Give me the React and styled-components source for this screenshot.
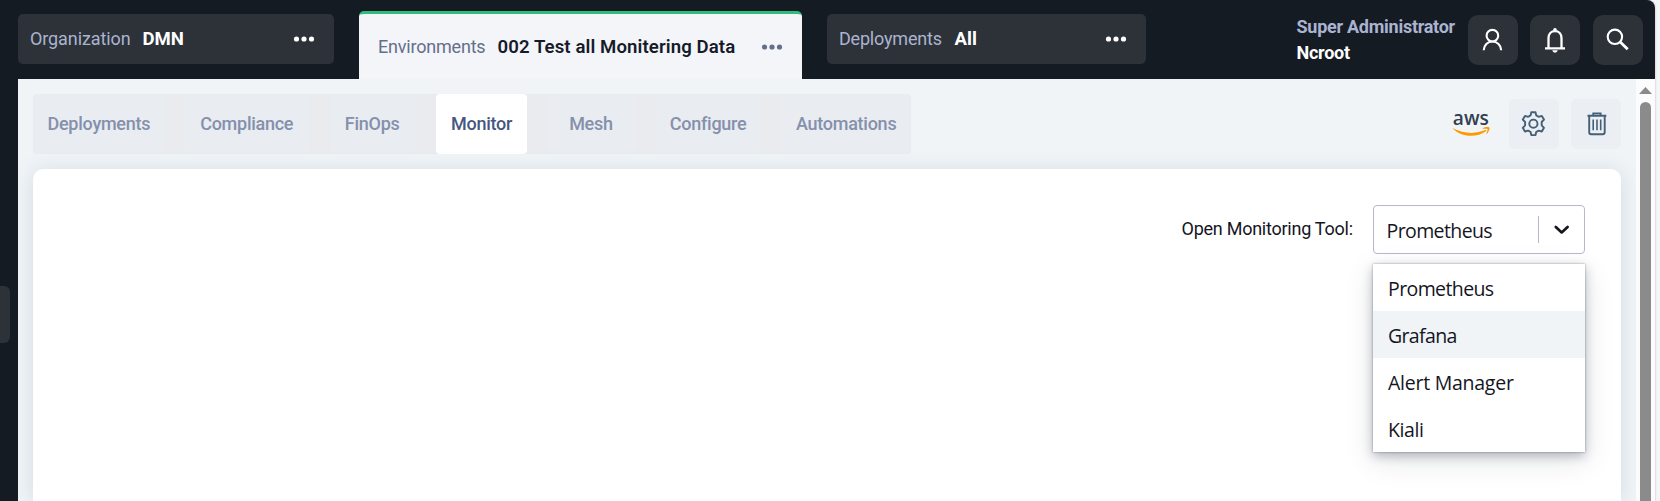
import React from "react";
import styled, { createGlobalStyle } from "styled-components";

const GlobalStyle = createGlobalStyle`
  *, *::before, *::after { box-sizing: border-box; }
  body {
    margin: 0;
    background: #f6f5f7;
    font-family: Roboto, "Liberation Sans", sans-serif;
    overflow: hidden;
  }
  svg { display: block; flex: none; }
`;

const Window = styled.div`
  width: 1655px;
  height: 501px;
  display: flex;
  flex-direction: column;
  background: #151b22;
  border-top-right-radius: 8px;
  overflow: hidden;
  box-shadow: 0 0 2px rgba(0, 0, 0, 0.3);
`;

const Header = styled.header`
  height: 79px;
  flex: none;
  display: flex;
  align-items: flex-start;
  padding-left: 18px;
`;

const Crumb = styled.div`
  display: flex;
  align-items: center;
  width: ${(p) => p.$width}px;
  height: 50px;
  margin: 14px 25px 0 0;
  padding: 0 19px 0 12px;
  border-radius: 5px;
  background: #2d3138;
  color: #fff;
`;

const ActiveCrumb = styled(Crumb)`
  height: 68px;
  margin-top: 11px;
  padding: 1px 19px 0 19px;
  border-top: 3px solid #31bb7f;
  border-radius: 5px 5px 0 0;
  background: #f4f5f9;
  color: #151b2b;
`;

const CrumbLabel = styled.span`
  width: ${(p) => p.$width}px;
  color: ${(p) => (p.$active ? "#646f8b" : "#aab4d0")};
  font-size: 18px;
  line-height: 22px;
  white-space: nowrap;
  letter-spacing: ${(p) => p.$spacing || 0}px;
`;

const CrumbValue = styled.span`
  flex: 1;
  font-size: 18.6px;
  font-weight: ${(p) => p.$weight || 700};
  line-height: 22px;
  white-space: nowrap;
  letter-spacing: ${(p) => p.$spacing || 0}px;
`;

const Account = styled.div`
  margin: 14px 0 0 auto;
  width: 171.5px;
  display: flex;
  flex-direction: column;
  font-size: 18px;
  font-weight: 700;
  line-height: 26px;
  white-space: nowrap;
`;

const Role = styled.span`
  color: #aab4d0;
  letter-spacing: -0.26px;
`;

const UserName = styled.span`
  color: #fff;
  letter-spacing: -0.25px;
`;

const HeaderActions = styled.div`
  display: flex;
  gap: 12px;
  margin: 15px 12px 0 0;
`;

const HeaderButton = styled.button`
  width: 50px;
  height: 50px;
  padding: 0;
  border: 0;
  border-radius: 10px;
  background: #2d3138;
  color: #fff;

  &:last-child { margin-left: 1px; }
`;

const Body = styled.div`
  flex: 1;
  min-height: 0;
  display: flex;
`;

const Rail = styled.div`
  width: 18px;
  flex: none;
  padding-top: 207px;
`;

const RailHandle = styled.div`
  width: 10px;
  height: 57px;
  border-radius: 0 6px 6px 0;
  background: #2d3138;
`;

const Content = styled.main`
  flex: 1;
  min-width: 0;
  padding: 15px 15px 0;
  display: flex;
  flex-direction: column;
  background: #f0f4f7;
  overflow: hidden;
`;

const Toolbar = styled.div`
  height: 60px;
  flex: none;
  display: flex;
  justify-content: space-between;
`;

const Tabs = styled.nav`
  display: flex;
  justify-content: space-between;
  width: 878px;
  border-radius: 4px;
  background: #eaebef;
`;

const Tab = styled.a`
  width: ${(p) => p.$width}px;
  padding-left: ${(p) => p.$indent || 15}px;
  border-radius: 4px;
  background: ${(p) => (p.$active ? "#fff" : "#e9ecf1")};
  color: ${(p) => (p.$active ? "#455780" : "#8490ac")};
  font-size: 18px;
  font-weight: 500;
  line-height: 60px;
  white-space: nowrap;
  letter-spacing: -0.26px;
`;

const Tools = styled.div`
  display: flex;
  align-items: center;
  gap: 12px;
`;

const AwsLogo = styled.svg`
  margin-right: 7px;
`;

const ToolButton = styled.button`
  width: 50px;
  height: 50px;
  padding: 0;
  border: 0;
  border-radius: 5px;
  background: #ebeef3;
  color: #446078;
`;

const Card = styled.section`
  flex: 1;
  margin-top: 15px;
  padding: 36px 36px 0;
  border-radius: 10px 10px 0 0;
  background: #fff;
  box-shadow: 0 2px 20px rgba(80, 110, 140, 0.18);
  display: flex;
  justify-content: flex-end;
  align-items: flex-start;
`;

const FieldLabel = styled.label`
  width: 191.5px;
  margin-top: 12px;
  color: #15151f;
  font-size: 18px;
  line-height: 24px;
  white-space: nowrap;
  letter-spacing: -0.25px;
`;

const Select = styled.div`
  position: relative;
  width: 212px;
  height: 49px;
  display: flex;
  align-items: center;
  padding-left: 12.5px;
  border: 1px solid #b9b7cd;
  border-radius: 4px;
  background: #fff;
  font-family: "Open Sans", "Noto Sans", sans-serif;
  font-size: 19.5px;
  color: #15151f;
`;

const SelectValue = styled.span`
  flex: 1;
  line-height: 27px;
  padding-top: 2px;
  letter-spacing: -0.6px;
`;

const Indicator = styled.span`
  height: 27px;
  width: 46px;
  border-left: 1px solid #b9b7cd;
  display: flex;
  align-items: center;
  padding-left: 14px;
`;

const Menu = styled.ul`
  position: absolute;
  top: 58px;
  left: -1px;
  width: 212px;
  margin: 0;
  padding: 0;
  list-style: none;
  background: #fff;
  box-shadow: 0 0 2px rgba(20, 30, 50, 0.4), 0 4px 10px rgba(20, 30, 50, 0.27), 0 8px 28px rgba(20, 30, 50, 0.12);
`;

const Option = styled.li`
  height: 47px;
  padding: 3px 0 0 15px;
  line-height: 44px;
  letter-spacing: ${(p) => p.$spacing}px;
  background: ${(p) => (p.$focused ? "#f0f4f7" : "#fff")};
`;

const ScrollBar = styled.div`
  width: 19px;
  flex: none;
  padding: 8px 3px 0;
  display: flex;
  flex-direction: column;
  align-items: center;
  gap: 8px;
  background: #fcfcfc;
`;

const Thumb = styled.div`
  flex: 1;
  width: 11px;
  border-radius: 5.5px 5.5px 0 0;
  background: #8b8b8b;
`;

const Dots = ({ color = "#fff" }) => (
  <svg width="22" height="8" viewBox="0 0 22 8" fill={color}>
    <circle cx="3.5" cy="4" r="2.6" />
    <circle cx="11" cy="4" r="2.6" />
    <circle cx="18.5" cy="4" r="2.6" />
  </svg>
);

const UserIcon = () => (
  <svg width="50" height="50" fill="none" stroke="currentColor" strokeWidth="2.1">
    <circle cx="24.4" cy="20.7" r="5.8" />
    <path d="M15.7 35.2C15.9 30 19.6 26.5 24.4 26.5S33 30 33.2 35.2" />
  </svg>
);

const BellIcon = () => (
  <svg width="50" height="50" fill="none" stroke="currentColor" strokeWidth="2.3">
    <path d="M18.5 33V23.2C18.5 19 21.2 16.2 25 16.2S31.5 19 31.5 23.2V33" />
    <path d="M15 33.3H35" />
    <path d="M22.2 35.3H27.8Q27.2 37.7 25 37.7T22.2 35.3Z" fill="currentColor" stroke="none" />
    <circle cx="25" cy="14.8" r="1.8" fill="currentColor" stroke="none" />
  </svg>
);

const SearchIcon = () => (
  <svg width="50" height="50" fill="none" stroke="currentColor">
    <circle cx="21.9" cy="21.8" r="7.2" strokeWidth="2.1" />
    <path d="M27.2 27L34.7 34.3" strokeWidth="2.8" />
  </svg>
);

const GearIcon = () => (
  <svg width="50" height="50" fill="none" stroke="currentColor" strokeWidth="1.9" strokeLinejoin="round">
    <circle cx="24.4" cy="24.7" r="4.1" />
    <path d="M22.3 13.3H26.5L27.2 16.4L29.6 17.8L32.8 16.9L35 20.6L32.7 23V26.4L35 28.8L32.8 32.5L29.6 31.6L27.2 33L26.5 36.1H22.3L21.6 33L19.2 31.6L16 32.5L13.8 28.8L16.1 26.4V23L13.8 20.6L16 16.9L19.2 17.8L21.6 16.4Z" />
  </svg>
);

const TrashIcon = () => (
  <svg width="50" height="50" fill="none" stroke="currentColor" strokeWidth="1.9">
    <path d="M16.5 16.7H35.3M22.3 16.7V14.4H29.6V16.7" />
    <path d="M18.2 16.7V33.2Q18.2 35.2 20.2 35.2H31.7Q33.7 35.2 33.7 33.2V16.7" />
    <path d="M22.2 20.6V31.3M26 20.6V31.3M29.7 20.6V31.3" strokeWidth="1.6" />
  </svg>
);

const tabs = [
  { name: "Deployments", width: 132, indent: 14.5 },
  { name: "Compliance", width: 124.5 },
  { name: "FinOps", width: 86 },
  { name: "Monitor", width: 91, active: true },
  { name: "Mesh", width: 87.5, indent: 22 },
  { name: "Configure", width: 106 },
  { name: "Automations", width: 130 },
];

const options = [
  { name: "Prometheus", spacing: -0.6 },
  { name: "Grafana", spacing: -0.65 },
  { name: "Alert Manager", spacing: -0.25 },
  { name: "Kiali", spacing: -0.4 },
];

export default function App() {
  return (
    <>
      <GlobalStyle />
      <Window>
        <Header>
          <Crumb $width={316}>
            <CrumbLabel $width={112.5} $spacing={-0.1}>Organization</CrumbLabel>
            <CrumbValue>DMN</CrumbValue>
            <Dots />
          </Crumb>
          <ActiveCrumb $width={443}>
            <CrumbLabel $width={119.5} $spacing={-0.2} $active>Environments</CrumbLabel>
            <CrumbValue $weight={600} $spacing={0.1}>002 Test all Monitering Data</CrumbValue>
            <Dots color="#646f8b" />
          </ActiveCrumb>
          <Crumb $width={319}>
            <CrumbLabel $width={115.5} $spacing={-0.2}>Deployments</CrumbLabel>
            <CrumbValue>All</CrumbValue>
            <Dots />
          </Crumb>
          <Account>
            <Role>Super Administrator</Role>
            <UserName>Ncroot</UserName>
          </Account>
          <HeaderActions>
            <HeaderButton aria-label="Account"><UserIcon /></HeaderButton>
            <HeaderButton aria-label="Notifications"><BellIcon /></HeaderButton>
            <HeaderButton aria-label="Search"><SearchIcon /></HeaderButton>
          </HeaderActions>
        </Header>
        <Body>
          <Rail><RailHandle /></Rail>
          <Content>
            <Toolbar>
              <Tabs>
                {tabs.map((t) => (
                  <Tab key={t.name} $width={t.width} $indent={t.indent} $active={t.active}>{t.name}</Tab>
                ))}
              </Tabs>
              <Tools>
                <AwsLogo width="38" height="42" viewBox="0 -8 38 42">
                  <text x="0.8" y="13.8" fontFamily="Open Sans" fontSize="20" fontWeight="600" textLength="36" lengthAdjust="spacingAndGlyphs" fill="#333e4f">aws</text>
                  <g fill="#f90" transform="translate(0 0.6)">
                    <path d="M0.3 16.4Q17.5 25 33.5 18.5Q34.8 18.1 34.3 19.3C25 26.4 9 26.1 0.3 16.4Z" />
                    <path d="M30.5 16.8C33 15.1 37 15.2 37.5 16C38 16.8 36.8 20.6 34.8 22.4C34.3 22.6 34.2 22.3 34.4 21.9C35.1 20.2 35.9 18.2 35.5 17.5C35 16.9 32.6 17 31 17.2C30.5 17.2 30.2 17.1 30.5 16.8Z" />
                  </g>
                </AwsLogo>
                <ToolButton aria-label="Settings"><GearIcon /></ToolButton>
                <ToolButton aria-label="Delete"><TrashIcon /></ToolButton>
              </Tools>
            </Toolbar>
            <Card>
              <FieldLabel>Open Monitoring Tool:</FieldLabel>
              <Select>
                <SelectValue>Prometheus</SelectValue>
                <Indicator>
                  <svg width="18" height="12" viewBox="0 0 18 12" fill="none" stroke="#15151f" strokeWidth="2.7" strokeLinecap="round" strokeLinejoin="round">
                    <path d="M2.8 3L8.7 8.4L14.6 3" />
                  </svg>
                </Indicator>
                <Menu>
                  {options.map((o) => (
                    <Option key={o.name} $spacing={o.spacing} $focused={o.name === "Grafana"}>{o.name}</Option>
                  ))}
                </Menu>
              </Select>
            </Card>
          </Content>
          <ScrollBar>
            <svg width="13" height="7" viewBox="0 0 13 7"><path d="M0 7L6.5 0L13 7Z" fill="#8b8b8b" /></svg>
            <Thumb />
          </ScrollBar>
        </Body>
      </Window>
    </>
  );
}
